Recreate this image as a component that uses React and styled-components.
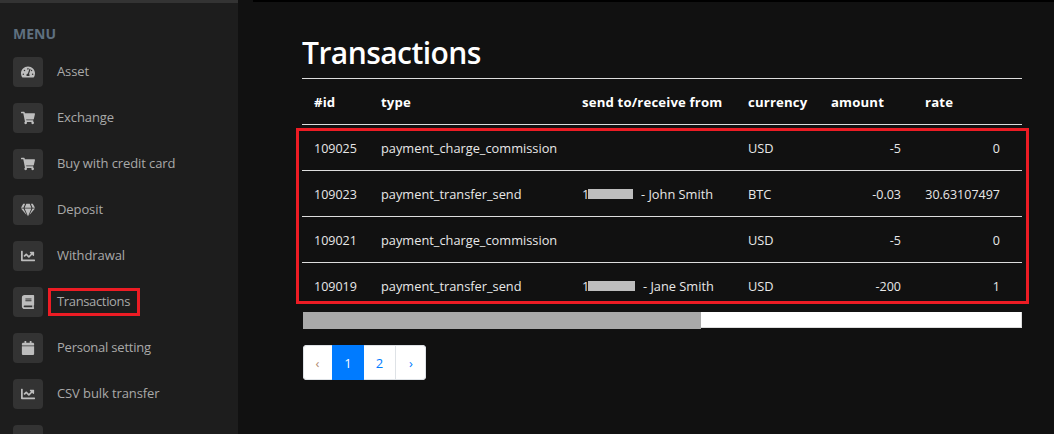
import React from "react";
import styled, { createGlobalStyle } from "styled-components";
import { FaTachometerAlt, FaShoppingCart, FaGem, FaChartLine, FaBook, FaCalendar } from "react-icons/fa";

const Global = createGlobalStyle`
  html, body { margin: 0; padding: 0; height: 100%; background: #111; overflow: hidden; }
  body { font-family: "Open Sans", "Noto Sans", "Liberation Sans", sans-serif; font-size: 14px; }
`;

const Page = styled.div`
  display: flex;
  width: 1054px;
  height: 434px;
  overflow: hidden;
  background: #111;
`;

const Sidebar = styled.aside`
  flex: 0 0 238px;
  box-sizing: border-box;
  height: 434px;
  background: #1d1d1d;
  border-top: 3px solid #333;
  padding: 22px 0 0 13px;
  overflow: hidden;
`;

const MenuTitle = styled.div`
  height: 18px;
  line-height: 18px;
  font-size: 14px;
  font-weight: 700;
  color: #5f7080;
  margin-bottom: 14px;
`;

const MenuList = styled.ul`
  list-style: none;
  margin: 0;
  padding: 0;
  display: flex;
  flex-direction: column;
  gap: 16px;
`;

const MenuItem = styled.li`
  display: flex;
  align-items: center;
  height: 30px;
  gap: 14px;
`;

const IconBox = styled.span`
  flex: 0 0 30px;
  height: 30px;
  border-radius: 4px;
  background: #333;
  color: #bdbdbd;
  display: flex;
  align-items: center;
  justify-content: center;
  font-size: 14px;
`;

const MenuLabel = styled.span`
  position: relative;
  top: -1px;
  font-size: 13px;
  color: #a9a9a9;
  letter-spacing: ${(p) => p.$track}px;
  white-space: nowrap;
`;

const LabelMark = styled.span`
  position: absolute;
  left: -9px;
  top: -4px;
  width: 92px;
  height: 28px;
  box-sizing: border-box;
  border: 3px solid #ed1c24;
`;

const Main = styled.main`
  flex: 1;
  min-width: 0;
  position: relative;
  padding: 33px 32px 0 64px;
  box-sizing: border-box;
`;

const TopStrip = styled.div`
  position: absolute;
  left: 15px;
  right: 0;
  top: 0;
  height: 2px;
  background: #000;
`;

const Title = styled.h1`
  margin: 0;
  height: 46px;
  box-sizing: border-box;
  font-size: 30px;
  line-height: 40px;
  font-weight: 600;
  color: #fff;
  letter-spacing: -0.55px;
  border-bottom: 1px solid #ddd;
`;

const TableArea = styled.div`
  position: relative;
`;

const Table = styled.table`
  width: 720px;
  table-layout: fixed;
  border-collapse: collapse;
  color: #e8e8e8;
`;

const Col = styled.col`
  width: ${(p) => p.$w}px;
`;

const Th = styled.th`
  height: 45px;
  padding: 2px 0 0 12px;
  box-sizing: border-box;
  border-bottom: 1px solid #ddd;
  text-align: left;
  font-size: 13.2px;
  letter-spacing: 0.15px;
  font-weight: 700;
  color: #fff;
  white-space: nowrap;
`;

const Td = styled.td`
  height: 46px;
  padding: 2px ${(p) => (p.$right ? "12px" : "0")} 0 ${(p) => (p.$right ? "0" : "12px")};
  box-sizing: border-box;
  border-bottom: 1px solid #ddd;
  text-align: ${(p) => (p.$right ? "right" : "left")};
  font-size: ${(p) => (p.$num ? "12.5px" : "12.8px")};
  white-space: nowrap;
  tr:last-child > & { border-bottom: 0; }
`;

const Redact = styled.span`
  display: inline-block;
  width: ${(p) => p.$w}px;
  height: 10px;
  margin: 0 1px 0 -1px;
  background: #bdbdbd;
  vertical-align: 0;
`;

const TableMark = styled.div`
  position: absolute;
  left: -6px;
  top: 49px;
  width: 733px;
  height: 176px;
  box-sizing: border-box;
  border: 3px solid #ed1c24;
  pointer-events: none;
`;

const ScrollTrack = styled.div`
  margin: 4px 0 0 1px;
  width: 719px;
  height: 16px;
  box-sizing: border-box;
  background: #fff;
  border-bottom: 1px solid #ddd;
  border-right: 1px solid #ddd;
`;

const ScrollThumb = styled.div`
  height: 17px;
  background: #a9a9a9;
`;

const Pager = styled.nav`
  display: flex;
  width: 123px;
  margin: 17px 0 0 1px;
  height: 35px;
  background: #fff;
  border-radius: 4px;
  overflow: hidden;
  box-shadow: inset 0 0 0 1px #dee2e6;
`;

const PageCell = styled.span`
  flex: 0 0 ${(p) => p.$w}px;
  box-sizing: border-box;
  display: flex;
  align-items: center;
  justify-content: center;
  font-size: 13px;
  background: ${(p) => (p.$active ? "#007bff" : "transparent")};
  color: ${(p) => (p.$active ? "#fff" : p.$muted ? "#b08a70" : "#007bff")};
  border-left: ${(p) => (p.$divide ? "1px solid #dee2e6" : "0")};
`;

const menu = [
  ["Asset", FaTachometerAlt, -0.1],
  ["Exchange", FaShoppingCart, -0.1],
  ["Buy with credit card", FaShoppingCart, -0.1],
  ["Deposit", FaGem, -0.1],
  ["Withdrawal", FaChartLine, -0.1],
  ["Transactions", FaBook, -0.35],
  ["Personal setting", FaCalendar, -0.22],
  ["CSV bulk transfer", FaChartLine, -0.1],
  ["", null, 0],
];

const cols = [67, 201, 166, 83, 94, 99, 10];
const heads = ["#id", "type", "send to/receive from", "currency", "amount", "rate", ""];
const rows = [
  ["109025", "payment_charge_commission", null, "USD", "-5", "0"],
  ["109023", "payment_transfer_send", ["John Smith", 45], "BTC", "-0.03", "30.63107497"],
  ["109021", "payment_charge_commission", null, "USD", "-5", "0"],
  ["109019", "payment_transfer_send", ["Jane Smith", 47], "USD", "-200", "1"],
];

export default function App() {
  return (
    <Page>
      <Global />
      <Sidebar>
        <MenuTitle>MENU</MenuTitle>
        <MenuList>
          {menu.map(([label, Icon, track], i) => (
            <MenuItem key={i}>
              <IconBox>{Icon && <Icon />}</IconBox>
              {label && (
                <MenuLabel $track={track}>
                  {label}
                  {label === "Transactions" && <LabelMark />}
                </MenuLabel>
              )}
            </MenuItem>
          ))}
        </MenuList>
      </Sidebar>
      <Main>
        <TopStrip />
        <Title>Transactions</Title>
        <TableArea>
          <Table>
            <colgroup>
              {cols.map((w, i) => (
                <Col key={i} $w={w} />
              ))}
            </colgroup>
            <thead>
              <tr>
                {heads.map((h, i) => (
                  <Th key={i}>{h}</Th>
                ))}
              </tr>
            </thead>
            <tbody>
              {rows.map((r) => (
                <tr key={r[0]}>
                  <Td $num>{r[0]}</Td>
                  <Td>{r[1]}</Td>
                  <Td>
                    {r[2] && (
                      <>
                        1<Redact $w={r[2][1]} /> &nbsp;- {r[2][0]}
                      </>
                    )}
                  </Td>
                  <Td>{r[3]}</Td>
                  <Td $right $num>{r[4]}</Td>
                  <Td $right $num>{r[5]}</Td>
                  <Td />
                </tr>
              ))}
            </tbody>
          </Table>
          <TableMark />
        </TableArea>
        <ScrollTrack>
          <ScrollThumb style={{ width: `${(399 / 719) * 100}%` }} />
        </ScrollTrack>
        <Pager>
          <PageCell $w={29} $muted>‹</PageCell>
          <PageCell $w={32} $active>1</PageCell>
          <PageCell $w={31}>2</PageCell>
          <PageCell $w={31} $divide>›</PageCell>
        </Pager>
      </Main>
    </Page>
  );
}
